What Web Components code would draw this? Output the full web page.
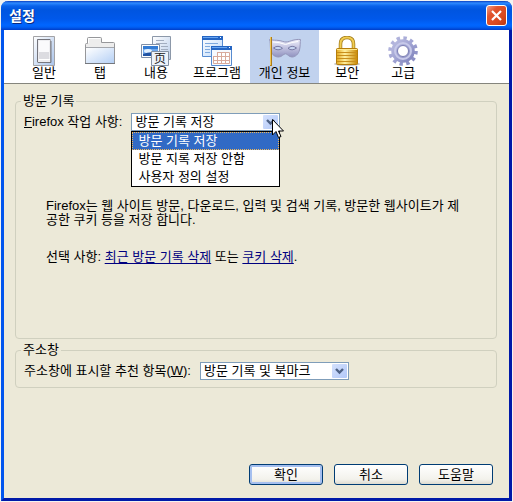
<!DOCTYPE html>
<html lang="ko">
<head>
<meta charset="utf-8">
<title>설정</title>
<style>
  body {
    margin: 0;
    background: #f3f3f1;
    color: #000;
    font: 13px/14px "Liberation Sans", "Noto Sans CJK KR", sans-serif;
  }
  p { margin: 0; }
  a {
    color: #00007f;
    text-decoration-skip-ink: none;
    text-underline-offset: 2px;
  }
  .options { margin-top: 23px; }
  .note { padding: 68px 24px 67px 22px; }
</style>
</head>
<body>

<xp-window caption="설정">
  <xp-tab slot="tabs" icon="general">일반</xp-tab>
  <xp-tab slot="tabs" icon="tabs">탭</xp-tab>
  <xp-tab slot="tabs" icon="content">내용</xp-tab>
  <xp-tab slot="tabs" icon="programs">프로그램</xp-tab>
  <xp-tab slot="tabs" icon="privacy" selected>개인 정보</xp-tab>
  <xp-tab slot="tabs" icon="security">보안</xp-tab>
  <xp-tab slot="tabs" icon="advanced">고급</xp-tab>

  <xp-group caption="방문 기록">
    <xp-select options="방문 기록 저장|방문 지록 저장 안함|사용자 정의 설정" open><u>F</u>irefox 작업 사항:</xp-select>
    <div class="note">
      <p>Firefox는 웹 사이트 방문, 다운로드, 입력 및 검색 기록, 방문한 웹사이트가 제공한 쿠키 등을 저장 합니다.</p>
      <p class="options">선택 사항: <a href="#history">최근 방문 기록 삭제</a> 또는 <a href="#cookies">쿠키 삭제</a>.</p>
    </div>
  </xp-group>

  <xp-group caption="주소창">
    <xp-select options="방문 기록 및 북마크">주소창에 표시할 추천 항목(<u>W</u>):</xp-select>
  </xp-group>

  <xp-button slot="buttons" default>확인</xp-button>
  <xp-button slot="buttons">취소</xp-button>
  <xp-button slot="buttons">도움말</xp-button>
</xp-window>

<script>
const ICONS = {
  general: `
    <defs><linearGradient id="g" x1="0" y1="0" x2="1" y2="1"><stop offset="0" stop-color="#fff"/><stop offset="1" stop-color="#a9c3ea"/></linearGradient></defs>
    <path d="M5.5 .5h21v29h-21z" fill="url(#g)" stroke="#a3a3a6"/>
    <path d="M9.500 3.500h13v23h-13z" fill="#eeeef1" stroke="#aaaab0"/>
    <path d="M9.500 26V3.500H22" fill="none" stroke="#74747c"/>
    <path d="M11 5h10v11H11z" fill="#fafafc"/><path d="M11 16h10v7H11z" fill="#dcdce1"/>
    <path d="M11 23.500h11" stroke="#fff"/><path d="M10 26.500h13V5" fill="none" stroke="#77787f"/>`,
  tabs: `
    <defs><linearGradient id="g" x1="0" y1="0" x2="1" y2="1"><stop offset="0" stop-color="#fff"/><stop offset="1" stop-color="#b5d0f5"/></linearGradient></defs>
    <path d="M1.500 27.500V8.500Q1.500 7.500 2.500 7.500H3.500V2.500Q3.500 1.500 4.500 1.500H16.500Q17.500 1.500 17.500 2.500V6.500H29.500Q30.500 6.500 30.500 7.500V27.500Z" fill="#ededed" stroke="#96979a"/>
    <path d="M2 12H30V27H2z" fill="url(#g)"/><path d="M2 11.500h28" stroke="#a4a7ad"/>
    <path d="M1 27.500h30" stroke="#74777d"/><path d="M4.500 7V2.500H16" fill="none" stroke="#fff"/>`,
  content: `
    <defs><linearGradient id="g" x1="0" y1="0" x2="1" y2="1"><stop offset="0" stop-color="#fff"/><stop offset="1" stop-color="#b9cdea"/></linearGradient></defs>
    <path d="M12.500 .5h18v23h-18z" fill="url(#g)" stroke="#8c98a9"/>
    <path d="M16 4.500h8M16 7.500h11M21 10.500h7M21 13.500h7" stroke="#a2adbf"/>
    <path d="M1.500 8.500h18v13h-18z" fill="#fff" stroke="#8090a8"/>
    <path d="M3 10h15v10H3z" fill="#70a9ed"/><path d="M3 10h15v3H3z" fill="#347cd4"/>
    <ellipse cx="8" cy="15" rx="4" ry="2" fill="#e3f1ff"/><path d="M3 18q7-3 15-1v3H3z" fill="#2254a4"/>
    <path d="M11.500 15.500h17v14h-17z" fill="#edf3fb" stroke="#8290a3"/>
    <text x="14" y="27" font-family="Noto Sans CJK SC, sans-serif" font-size="12" fill="#222">页</text>`,
  programs: `
    <defs><linearGradient id="g" x1="0" y1="0" x2="1" y2="1"><stop offset="0" stop-color="#fff"/><stop offset="1" stop-color="#bdd9fa"/></linearGradient></defs>
    <path d="M1.500 .5h20v20h-20z" fill="url(#g)" stroke="#578bd0"/>
    <path d="M1 0h21v4H1z" fill="#2465c3"/><path d="M2 1.500h15" stroke="#68a6f2"/><path d="M19 1.500h1" stroke="#fff"/>
    <path d="M4 7.500h13M4 10.500h5M4 13.500h5M4 16.500h5" stroke="#7ea9de"/>
    <path d="M10.500 10.500h20v19h-20z" fill="#f6faff" stroke="#578bd0"/>
    <path d="M10 10h21v4H10z" fill="#2465c3"/><path d="M11 11.500h15" stroke="#68a6f2"/><path d="M28 11.500h1" stroke="#fff"/>
    <path d="M16.500 16.500h12v11h-16v-7h4zM12 20.500h17M12 24.500h17M16.500 16v12M20.500 16v12M24.500 16v12" fill="#fff" stroke="#d8aa9c"/>`,
  privacy: `
    <defs><linearGradient id="g" x1="0" y1="0" x2="0" y2="1"><stop offset="0" stop-color="#eeeefa"/><stop offset=".5" stop-color="#bfc0df"/><stop offset="1" stop-color="#9092bf"/></linearGradient></defs>
    <path d="M.5 3.500C4 4.500 7 4 10 4.500c3 .4 4.500 1.500 7 1.500s4.500-1.200 7-1.800c3-.7 5-.9 7.500-.7C31 6 31.500 10 30.500 14c-1 4-4 7-7.500 7-3.300 0-4.500-3.200-6.500-3.200S13 21 9.500 21C5 21 2 17.500 1.500 13 1.200 9.500 1.500 6 .5 3.500z" fill="url(#g)" stroke="#9496ba"/>
    <path d="M4.500 12Q9 8.500 13.500 12.300Q9 15.500 4.500 12zM19 12.300Q23 8.500 27.500 12Q23 15.500 19 12.300z" fill="#c6d5f1" stroke="#7779a3"/>
    <path d="M4 6q6 0 12.500 2.500Q23 6 29 5.500" fill="none" stroke="#fff"/>
    <path d="M2 1v29" stroke="#ad7d18" stroke-width="2"/><path d="M1.500 1v28" stroke="#edc65b"/>`,
  security: `
    <defs><linearGradient id="g"><stop offset="0" stop-color="#e3a81b"/><stop offset=".4" stop-color="#fff0a0"/><stop offset="1" stop-color="#c98700"/></linearGradient></defs>
    <ellipse cx="16" cy="28" rx="13" ry="2" fill="#c7c7c7"/>
    <path d="M9.500 14V8C9.500 3.500 12 1.500 16 1.500S22.500 3.500 22.500 8v6" fill="none" stroke="#a17b1c" stroke-width="3.500"/>
    <path d="M9.500 14V8C9.500 3.500 12 1.500 16 1.500S22.500 3.500 22.500 8v6" fill="none" stroke="#f1cc50" stroke-width="2"/>
    <rect x="5.500" y="12.500" width="21" height="16" rx="1" fill="url(#g)" stroke="#b57d0c"/>
    <path d="M6 16.500h20M6 19.500h20M6 22.500h20M6 25.500h20" stroke="#c98f1c"/><path d="M6 13.500h20" stroke="#ffe98b"/>`,
  advanced: `
    <defs><linearGradient id="g" x1="0" y1="0" x2="1" y2="1"><stop offset="0" stop-color="#b7b9df"/><stop offset=".5" stop-color="#a1a4d3"/><stop offset="1" stop-color="#8588bf"/></linearGradient></defs>
    <g fill="none" stroke="url(#g)">
      <circle cx="16" cy="15" r="12.800" stroke-width="4" stroke-dasharray="3.350 3.350"/>
      <circle cx="16" cy="15" r="8.500" stroke-width="6.500"/>
    </g>
    <circle cx="16" cy="15" r="8" fill="none" stroke="#c7c9e9" stroke-width="2"/>
    <circle cx="16" cy="15" r="5.500" fill="#fff" stroke="#7b7eb3"/>`
};

class XpWindow extends HTMLElement {
  constructor() {
    super();
    this.attachShadow({ mode: 'open' });
  }

  connectedCallback() {
    this.shadowRoot.innerHTML = `
      <style>
        :host {
          display: flex;
          flex-direction: column;
          box-sizing: border-box;
          min-height: 100vh;
          padding: 1px;
        }
        .frame {
          flex: 1;
          display: flex;
          flex-direction: column;
          border: solid #0046e0;
          border-width: 0 3px 3px;
          border-color: #0046e0 #0019a8 #0019a8 #0055ee;
          border-radius: 7px 7px 0 0;
          background: #ece9d8;
        }
        header {
          display: flex;
          align-items: center;
          justify-content: space-between;
          height: 29px;
          margin: 0 -3px;
          padding: 0 5px 0 8px;
          box-sizing: border-box;
          border-radius: 7px 7px 0 0;
          background: linear-gradient(#0a3fc0, #2f8bff 2px, #0a62ea 5px, #0055e0 9px, #0058ea 18px, #0066ff 24px, #0060f5 26px, #003dc8);
        }
        h1 {
          margin: 0;
          font-size: 14px;
          line-height: 18px;
          color: #fff;
          text-shadow: 1px 1px #0a2a80;
        }
        .close {
          display: flex;
          width: 21px;
          height: 21px;
          padding: 0;
          border: 1px solid #fff;
          border-radius: 3px;
          background: linear-gradient(135deg, #f0a08a, #e2552f 30%, #d9481f 70%, #b83812);
        }
        nav {
          display: flex;
          height: 53px;
          padding-left: 12px;
          background: #fff;
          border-bottom: 1px solid #85857d;
        }
        main {
          display: flex;
          flex-direction: column;
          gap: 4px;
          padding: 10px 12px 0 11px;
        }
        footer {
          display: flex;
          justify-content: flex-end;
          gap: 11px;
          margin-top: auto;
          padding: 12px 16px 13px;
        }
      </style>
      <div class="frame">
        <header>
          <h1>${this.getAttribute('caption')}</h1>
          <button class="close" aria-label="닫기">
            <svg width="19" height="19"><path d="M5 5l9 9M14 5l-9 9" stroke="#fff" stroke-width="2.200"/></svg>
          </button>
        </header>
        <nav><slot name="tabs"></slot></nav>
        <main><slot></slot></main>
        <footer><slot name="buttons"></slot></footer>
      </div>
    `;
  }
}

class XpTab extends HTMLElement {
  constructor() {
    super();
    this.attachShadow({ mode: 'open' });
  }

  connectedCallback() {
    this.shadowRoot.innerHTML = `
      <style>
        :host { display: flex; }
        button {
          display: flex;
          flex-direction: column;
          align-items: center;
          min-width: 56px;
          padding: 6px 9px 0;
          border: 0;
          background: none;
          color: inherit;
          font: inherit;
          white-space: nowrap;
        }
        :host([selected]) button { background: #c1d2ee; }
        svg { display: block; flex: none; }
      </style>
      <button aria-pressed="${this.hasAttribute('selected')}">
        <svg width="32" height="30" viewBox="0 0 32 30" aria-hidden="true">${ICONS[this.getAttribute('icon')]}</svg>
        <slot></slot>
      </button>
    `;
  }
}

class XpGroup extends HTMLElement {
  constructor() {
    super();
    this.attachShadow({ mode: 'open' });
  }

  connectedCallback() {
    this.shadowRoot.innerHTML = `
      <style>
        :host { display: block; }
        fieldset {
          min-width: 0;
          margin: 0;
          padding: 5px 8px 7px;
          border: 1px solid #d0d0bf;
          border-radius: 4px;
        }
        legend {
          margin-left: -3px;
          padding: 0 2px;
        }
      </style>
      <fieldset>
        <legend>${this.getAttribute('caption')}</legend>
        <slot></slot>
      </fieldset>
    `;
  }
}

class XpSelect extends HTMLElement {
  constructor() {
    super();
    this.attachShadow({ mode: 'open' });
  }

  get options() {
    return this.getAttribute('options').split('|');
  }

  _popup() {
    if (!this.hasAttribute('open')) return '';
    return `
      <ul role="listbox">
        ${this.options.map((o, i) => `<li role="option" aria-selected="${i === 0}">${o}</li>`).join('')}
      </ul>
      <svg class="pointer" width="12" height="20" aria-hidden="true">
        <path d="M.5 .5v15.500l3.500-3.500 2.500 6 2.500-1-2.500-5.500h5z" fill="#fff" stroke="#000"/>
      </svg>
    `;
  }

  connectedCallback() {
    this.shadowRoot.innerHTML = `
      <style>
        :host {
          display: flex;
          align-items: center;
          gap: 9px;
        }
        .box {
          position: relative;
          display: flex;
          width: 149px;
        }
        select {
          appearance: none;
          width: 100%;
          height: 18px;
          padding: 0 20px 0 3px;
          border: 1px solid #7f9db9;
          border-radius: 0;
          background: #fff;
          color: inherit;
          font: inherit;
        }
        .arrow {
          position: absolute;
          top: 2px;
          right: 2px;
          pointer-events: none;
          border-radius: 1px;
          background: linear-gradient(135deg, #d4e1fd, #b2c8f8);
        }
        ul {
          position: absolute;
          z-index: 1;
          top: 18px;
          left: 0;
          right: 0;
          margin: 0;
          padding: 0;
          border: 1px solid #000;
          background: #fff;
          list-style: none;
        }
        li {
          padding: 0 5px;
          border: 1px solid transparent;
          line-height: 16px;
        }
        li[aria-selected="true"] {
          border: 1px dotted #f0b858;
          background: #316ac5;
          color: #fff;
        }
        .pointer {
          position: absolute;
          z-index: 2;
          left: 141px;
          top: 6px;
        }
      </style>
      <label for="list"><slot></slot></label>
      <div class="box">
        <select id="list">${this.options.map(o => `<option>${o}</option>`).join('')}</select>
        <svg class="arrow" width="15" height="14" aria-hidden="true">
          <path d="M4 5l3.500 3.500L11 5" fill="none" stroke="#4d6185" stroke-width="2.400"/>
        </svg>
        ${this._popup()}
      </div>
    `;
  }
}

class XpButton extends HTMLElement {
  constructor() {
    super();
    this.attachShadow({ mode: 'open' });
  }

  connectedCallback() {
    this.shadowRoot.innerHTML = `
      <style>
        :host { display: block; }
        button {
          display: block;
          min-width: 74px;
          height: 21px;
          padding: 0 8px;
          border: 1px solid #003c74;
          border-radius: 3px;
          background: linear-gradient(#fff, #f3f2ec 75%, #dedbd0);
          color: inherit;
          font: inherit;
        }
        :host([default]) button {
          box-shadow: inset 0 0 0 2px #a5bfef;
        }
      </style>
      <button><slot></slot></button>
    `;
  }
}

customElements.define('xp-window', XpWindow);
customElements.define('xp-tab', XpTab);
customElements.define('xp-group', XpGroup);
customElements.define('xp-select', XpSelect);
customElements.define('xp-button', XpButton);
</script>
</body>
</html>
